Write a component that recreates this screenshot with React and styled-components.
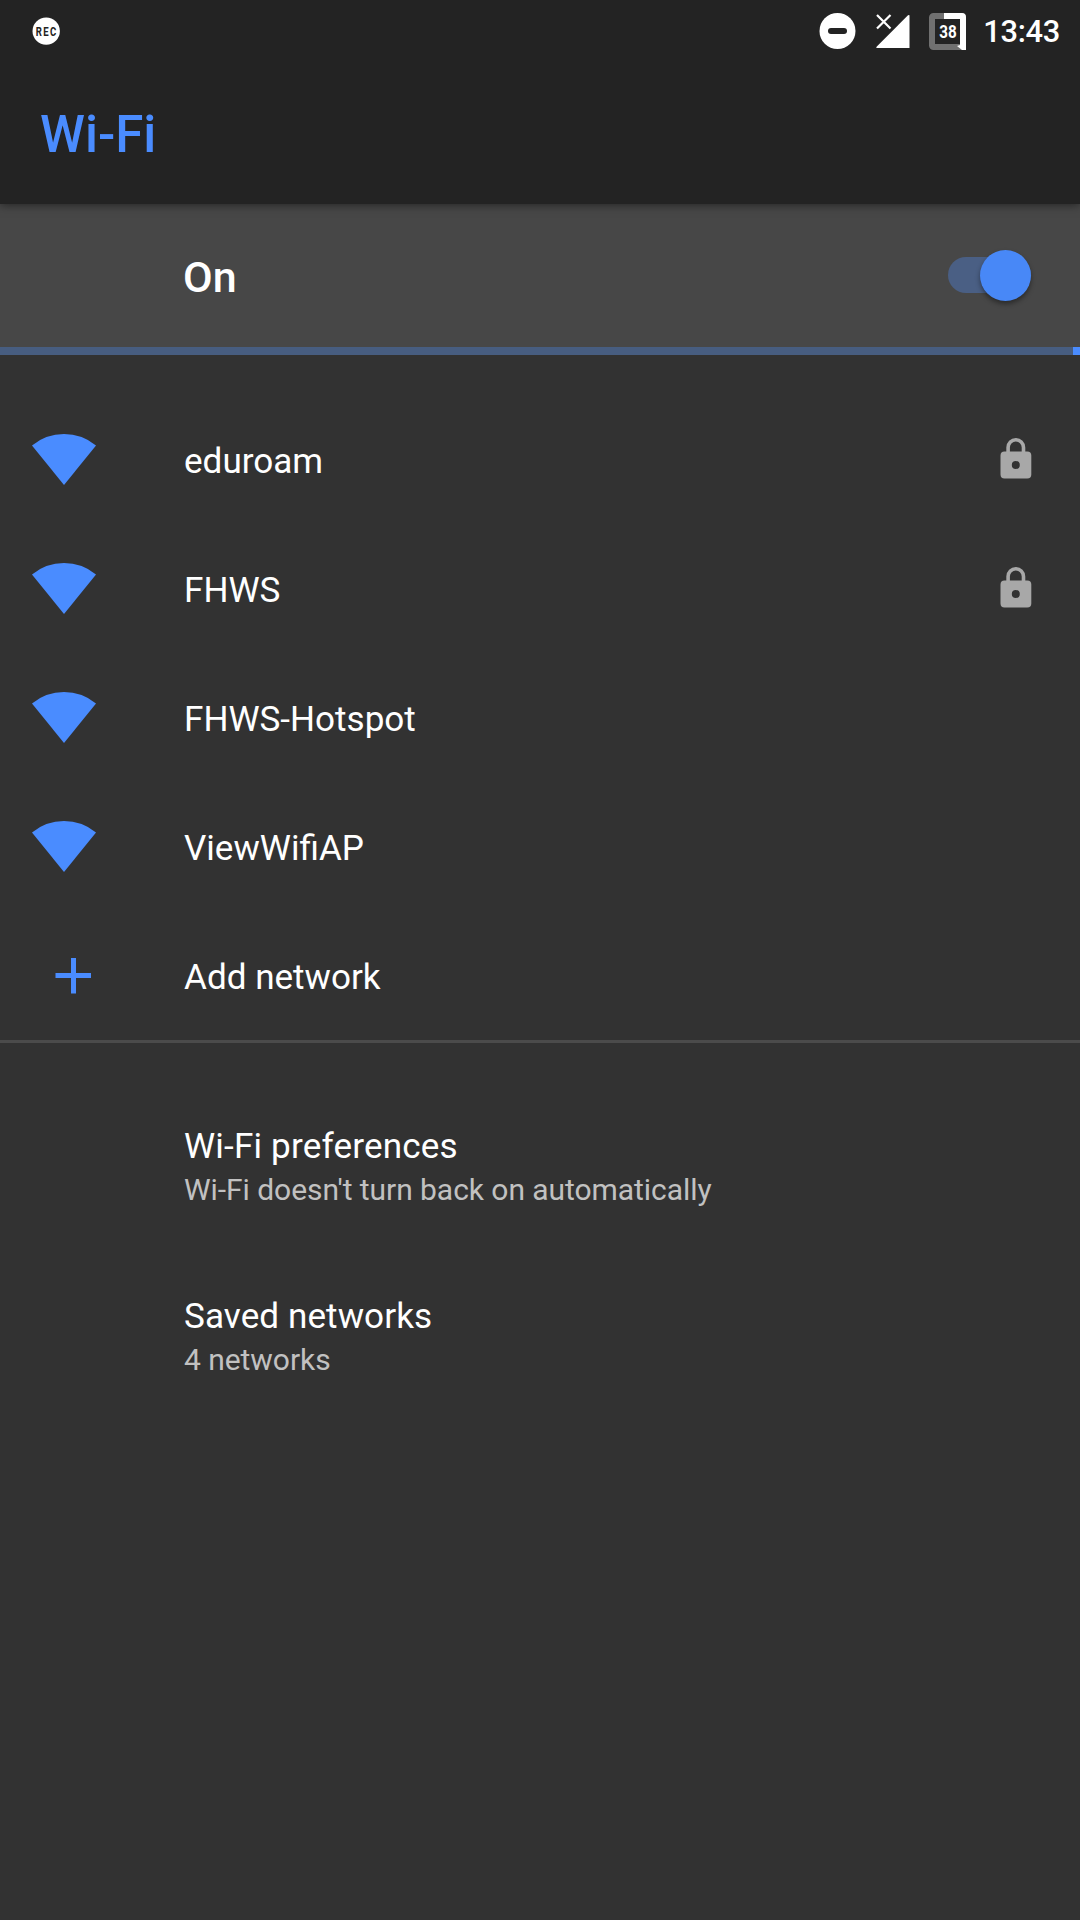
import React from "react";
import styled, { createGlobalStyle } from "styled-components";

const Global = createGlobalStyle`
  body { margin: 0; background: #323232; font-family: Roboto, "Noto Sans", sans-serif; }
`;
const Screen = styled.div`
  display: flex; flex-direction: column; width: 1080px; height: 1920px;
  background: #323232; color: #fff; overflow: hidden;
`;
const Header = styled.header`
  background: #232323; height: 204px; display: flex; flex-direction: column;
  box-shadow: 0 1px 9px rgba(0, 0, 0, 0.5); z-index: 1; flex: none;
`;
const StatusBar = styled.div`
  height: 62px; display: flex; align-items: center; justify-content: space-between;
  padding: 0 20px 0 32px;
`;
const StatusIcons = styled.div`
  display: flex; align-items: center;
  svg { display: block; }
`;
const StatusIcon = styled.svg`margin-left: ${(p) => p.$gap || 0}px;`;
const Clock = styled.span`
  font-size: 30.8px; font-weight: 500; line-height: 62px; padding-top: 1px;
  letter-spacing: -0.3px; margin-left: 17px; white-space: nowrap;
`;
const Title = styled.h1`
  margin: 0; padding: 2px 0 0 40px; height: 140px; line-height: 142px;
  font-size: 51px; font-weight: 500; color: #4a8cff;
`;
const SwitchBar = styled.div`
  background: #474747; height: 143px; display: flex; align-items: center;
  justify-content: space-between; padding: 0 49px 0 183px; flex: none; box-sizing: border-box;
`;
const SwitchLabel = styled.span`
  font-size: 43px; font-weight: 500; line-height: 48px; padding-top: 2px;
`;
const Track = styled.div`
  width: 83px; height: 36px; border-radius: 18px; background: #4a5f84; margin-bottom: 1px;
  display: flex; align-items: center; justify-content: flex-end;
`;
const Thumb = styled.div`
  width: 51px; height: 51px; border-radius: 50%; background: #4888f7; flex: none;
  box-shadow: 0 3px 5px rgba(0, 0, 0, 0.4);
`;
const Progress = styled.div`
  height: 8px; background: #475d80; display: flex; justify-content: flex-end; flex: none;
`;
const ProgressHead = styled.div`width: 7px; background: #4a8cff;`;
const Networks = styled.div`
  padding-top: 40px; height: 645px; border-bottom: 3px solid #4b4b4b; flex: none;
  box-sizing: content-box;
`;
const Row = styled.div`
  display: grid; grid-template-columns: 184px 1fr auto; align-items: center;
  height: 129px; padding-right: 48px;
  svg { display: block; }
`;
const RowIcon = styled.div`padding-left: ${(p) => p.$inset}px;`;
const LockSlot = styled.div`padding-bottom: 2px;`;
const Name = styled.span`
  font-size: 35.1px; line-height: 42px; padding-top: 2px; white-space: nowrap;
  letter-spacing: ${(p) => p.$tracking || "normal"};
`;
const Prefs = styled.div`padding-top: 39px;`;
const Pref = styled.div`
  height: 170px; box-sizing: border-box; padding: 41px 0 0 184px;
  display: flex; flex-direction: column;
`;
const Summary = styled.span`
  font-size: 30px; line-height: 36px; margin-top: 5px; color: #c1c1c1; white-space: nowrap;
  letter-spacing: -0.05px;
`;

const RecIcon = () => (
  <svg width="28" height="28" viewBox="0 0 28 28">
    <circle cx="14.2" cy="14.1" r="13.7" fill="#fff" />
    <text transform="translate(3.8 18.7) scale(.77 1)" fontSize="12.4" fontWeight="700" letterSpacing="1.8" fill="#232323">REC</text>
  </svg>
);
const DndIcon = () => (
  <StatusIcon width="37" height="37" viewBox="0 0 37 37">
    <circle cx="18.5" cy="18" r="18" fill="#fff" />
    <rect x="9" y="15" width="19" height="6" rx="3" fill="#232323" />
  </StatusIcon>
);
const SignalIcon = () => (
  <StatusIcon $gap={20} width="34" height="34" viewBox="0 0 34 34">
    <path d="M1 34Q-.4 34 .6 32.7L32 1.3Q33.5 .4 33.5 1.7V34Z" fill="#fff" />
    <path d="M1 1L14.5 14.5M14.5 1L1 14.5" stroke="#fff" strokeWidth="2.2" />
  </StatusIcon>
);
const BatteryIcon = () => (
  <StatusIcon $gap={19} width="37" height="37" viewBox="0 0 37 37">
    <rect x="3" y="3" width="31" height="31" rx="1.5" fill="none" stroke="#707070" strokeWidth="6" />
    <path d="M15 0H33Q37 0 37 4V37H33L28 33L31 32V6H15Z" fill="#fff" />
    <text x="10.2" y="24.6" fontSize="18.5" fontWeight="700" textLength="17.5" lengthAdjust="spacingAndGlyphs" fill="#fff">38</text>
  </StatusIcon>
);
const WifiIcon = () => (
  <svg width="64" height="52" viewBox="0 0 64 52">
    <path d="M32 51L0 11.4Q14 0 32 0T64 11.4Z" fill="#4a8cff" />
  </svg>
);
const PlusIcon = () => (
  <svg width="37" height="36" viewBox="0 0 37 36">
    <path d="M.5 17.5H36M18.5 0V35.5" stroke="#4a8cff" strokeWidth="5" />
  </svg>
);
const LockIcon = () => (
  <svg width="32" height="42" viewBox="0 0 32 42">
    <path d="M8.1 15V9.5a7.7 7.7 0 0 1 15.4 0V15" fill="none" stroke="#a8a8a8" strokeWidth="3.6" />
    <path fillRule="evenodd" fill="#a8a8a8" d="M4.5 13.5H27.3a4 4 0 0 1 4 4V36.5a4 4 0 0 1-4 4H4.5a4 4 0 0 1-4-4V17.5a4 4 0 0 1 4-4ZM15.8 23a4 4 0 1 0 0 8a4 4 0 1 0 0-8Z" />
  </svg>
);

const networks = [
  { name: "eduroam", locked: true },
  { name: "FHWS", locked: true },
  { name: "FHWS-Hotspot" },
  { name: "ViewWifiAP" },
];
const prefs = [
  { name: "Wi-Fi preferences", tracking: "0.18px", summary: "Wi-Fi doesn't turn back on automatically" },
  { name: "Saved networks", tracking: "0.08px", summary: "4 networks" },
];

export default function App() {
  return (
    <Screen>
      <Global />
      <Header>
        <StatusBar>
          <RecIcon />
          <StatusIcons>
            <DndIcon />
            <SignalIcon />
            <BatteryIcon />
            <Clock>13:43</Clock>
          </StatusIcons>
        </StatusBar>
        <Title>Wi-Fi</Title>
      </Header>
      <SwitchBar>
        <SwitchLabel>On</SwitchLabel>
        <Track><Thumb /></Track>
      </SwitchBar>
      <Progress><ProgressHead /></Progress>
      <Networks>
        {networks.map((n) => (
          <Row key={n.name}>
            <RowIcon $inset={32}><WifiIcon /></RowIcon>
            <Name>{n.name}</Name>
            {n.locked && <LockSlot><LockIcon /></LockSlot>}
          </Row>
        ))}
        <Row>
          <RowIcon $inset={55}><PlusIcon /></RowIcon>
          <Name>Add network</Name>
        </Row>
      </Networks>
      <Prefs>
        {prefs.map((p) => (
          <Pref key={p.name}>
            <Name $tracking={p.tracking}>{p.name}</Name>
            <Summary>{p.summary}</Summary>
          </Pref>
        ))}
      </Prefs>
    </Screen>
  );
}
